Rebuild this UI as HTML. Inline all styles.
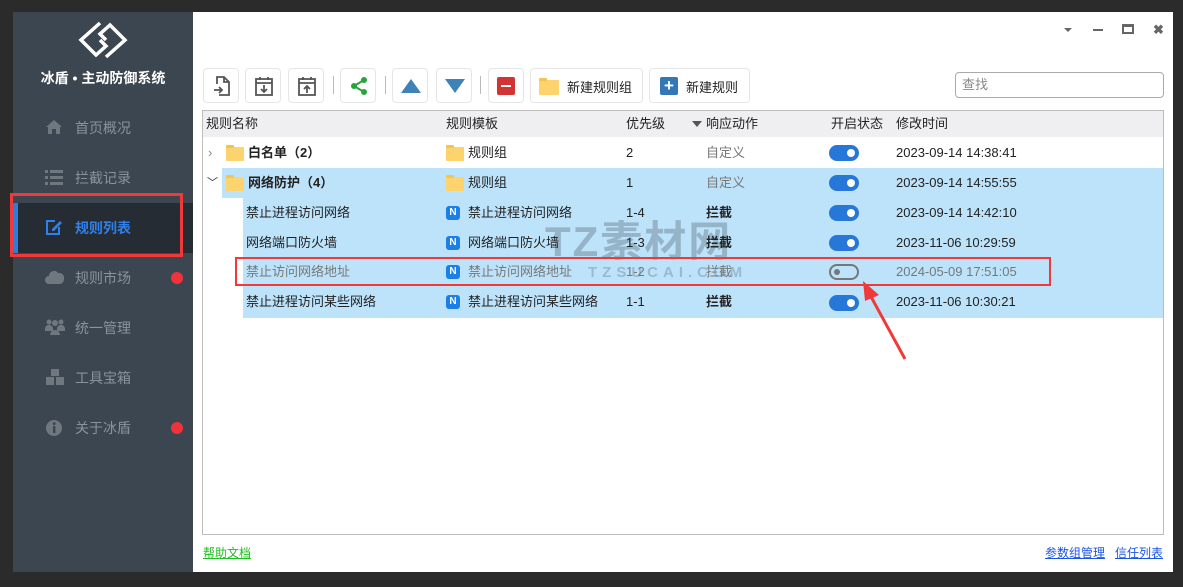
<!DOCTYPE html>
<html><head><meta charset="utf-8"><style>
*{margin:0;padding:0;box-sizing:border-box}
body{width:1183px;height:587px;background:#2b2b2b;position:relative;overflow:hidden;font-family:"Liberation Sans","Noto Sans CJK SC",sans-serif;font-size:13px;color:#222}
.abs{position:absolute}
#side{left:13px;top:12px;width:180px;height:560px;background:#3b4650}
#main{left:193px;top:12px;width:980px;height:560px;background:#fff}
.mi{position:absolute;left:13px;width:180px;height:50px;color:#8a939b;font-size:14px}
.mi span{position:absolute;left:62px;top:15px}
.mi svg{position:absolute;left:32px;top:16px}
.dot{position:absolute;left:158px;top:19px;width:12px;height:12px;border-radius:6px;background:#f2323a}
.btn{position:absolute;top:68px;height:35px;border:1px solid #e6e6e6;border-radius:4px;background:#fff}
.sep{position:absolute;top:76px;width:1px;height:18px;background:#bbb}
.row{position:absolute;height:30px;line-height:30px;font-size:13px}
.tog{position:absolute;width:30px;height:16px;border-radius:8px;background:#2777d9}
.tog::after{content:"";position:absolute;right:4px;top:4px;width:8px;height:8px;border-radius:4px;background:#fff}
.fold{position:absolute;width:18px;height:14px;background:#fdd36d;border-radius:1px}
.fold::before{content:"";position:absolute;left:0;top:-2px;width:8px;height:3px;background:#f7c34f;border-radius:1px 1px 0 0}
.nic{position:absolute;width:14px;height:14px;border-radius:3px;background:#1a7fe6;color:#fff;font-size:10px;font-weight:bold;line-height:14px;text-align:center}
</style></head><body>
<div id="side" class="abs"></div>
<div id="main" class="abs"></div>
<!-- logo -->
<svg class="abs" style="left:76px;top:20px" width="54" height="40" viewBox="0 0 54 40"><g fill="none" stroke="#fff" stroke-width="3.5"><path d="M24 3 L5 20 L20 35 L30 26 L24 20"/><path d="M30 37 L49 20 L34 5 L24 14 L30 20"/></g></svg>
<div class="abs" style="left:13px;width:180px;top:68px;text-align:center;color:#fff;font-weight:bold;font-size:14px">冰盾 • 主动防御系统</div>
<div class="mi" style="top:103px"><svg width="18" height="16" viewBox="0 0 18 16"><path d="M9 1 L1 8 H3 V15 H7 V10 H11 V15 H15 V8 H17Z" fill="#6f787f"/></svg><span>首页概况</span></div>
<div class="mi" style="top:153px"><svg width="18" height="16" viewBox="0 0 18 16" fill="#6f787f"><rect x="0" y="1" width="3" height="3"/><rect x="5" y="1" width="13" height="3"/><rect x="0" y="7" width="3" height="3"/><rect x="5" y="7" width="13" height="3"/><rect x="0" y="13" width="3" height="3"/><rect x="5" y="13" width="13" height="3"/></svg><span>拦截记录</span></div>
<div class="abs" style="left:13px;top:203px;width:180px;height:50px;background:#262c33"></div>
<div class="abs" style="left:13px;top:203px;width:5px;height:50px;background:#2d7de0"></div>
<div class="mi" style="top:203px;color:#2f80e8;font-weight:bold"><svg width="18" height="16" viewBox="0 0 18 16"><path d="M10 2 H2 V15 H14 V8" fill="none" stroke="#2f80e8" stroke-width="2"/><path d="M7 10 L15 2 L17 4 L9 12 H7Z" fill="#2f80e8"/></svg><span>规则列表</span></div>
<div class="mi" style="top:253px"><svg width="20" height="16" viewBox="0 0 20 16"><path d="M4 15 A4 4 0 0 1 4 7 A5 5 0 0 1 13 4 A5 5 0 0 1 19 10 A5 5 0 0 1 15 15Z" fill="#6f787f"/></svg><span>规则市场</span><i class="dot"></i></div>
<div class="mi" style="top:303px"><svg width="20" height="16" viewBox="0 0 20 16" fill="#6f787f"><circle cx="4" cy="3" r="2.5"/><circle cx="10" cy="4" r="3"/><circle cx="16" cy="3" r="2.5"/><path d="M0 11 A4 4 0 0 1 8 9 V12 H0Z M5 16 A5 5 0 0 1 15 16Z M12 9 A4 4 0 0 1 20 11 V12 H12Z"/></svg><span>统一管理</span></div>
<div class="mi" style="top:353px"><svg width="20" height="18" viewBox="0 0 20 18" fill="#6f787f"><rect x="6" y="0" width="8" height="7"/><rect x="1" y="8" width="8" height="8"/><rect x="11" y="8" width="8" height="8"/></svg><span>工具宝箱</span></div>
<div class="mi" style="top:403px"><svg width="18" height="18" viewBox="0 0 18 18"><circle cx="9" cy="9" r="8" fill="#6f787f"/><rect x="8" y="7" width="2.4" height="7" fill="#3b4650"/><circle cx="9.2" cy="4.6" r="1.4" fill="#3b4650"/></svg><span>关于冰盾</span><i class="dot"></i></div>
<div class="abs" style="left:10px;top:193px;width:173px;height:64px;border:3px solid #f03a3a"></div>
<!-- window controls -->
<div class="abs" style="left:1064px;top:28px;border-left:4px solid transparent;border-right:4px solid transparent;border-top:4px solid #666"></div>
<div class="abs" style="left:1093px;top:29px;width:10px;height:2px;background:#666"></div>
<div class="abs" style="left:1122px;top:24px;width:12px;height:10px;border:2px solid #666;border-top-width:3px"></div>
<div class="abs" style="left:1153px;top:22px;font-size:13px;color:#666;font-weight:bold">✖</div>
<!-- toolbar -->
<div class="btn" style="left:203px;width:36px"><svg style="margin:7px 0 0 9px" width="18" height="20" viewBox="0 0 18 20" fill="none" stroke="#555" stroke-width="1.8"><path d="M4 8 V1 H11 L16 6 V19 H6"/><path d="M11 1 V6 H16"/><path d="M1 14 H9 M6 11 L9 14 L6 17"/></svg></div>
<div class="btn" style="left:245px;width:36px"><svg style="margin:7px 0 0 9px" width="18" height="20" viewBox="0 0 18 20" fill="none" stroke="#555" stroke-width="1.8"><rect x="1" y="3" width="16" height="16"/><path d="M1 7 H17 M5 1 V4 M13 1 V4 M9 9 V16 M6 13 L9 16 L12 13"/></svg></div>
<div class="btn" style="left:288px;width:36px"><svg style="margin:7px 0 0 9px" width="18" height="20" viewBox="0 0 18 20" fill="none" stroke="#555" stroke-width="1.8"><rect x="1" y="3" width="16" height="16"/><path d="M1 7 H17 M5 1 V4 M13 1 V4 M9 17 V10 M6 13 L9 10 L12 13"/></svg></div>
<div class="sep" style="left:333px"></div>
<div class="btn" style="left:340px;width:36px"><svg style="margin:7px 0 0 8px" width="20" height="20" viewBox="0 0 20 20"><path d="M15 4 L5 10 L15 16" stroke="#25a53c" stroke-width="2" fill="none"/><circle cx="15" cy="4" r="3" fill="#25a53c"/><circle cx="5" cy="10" r="3" fill="#25a53c"/><circle cx="15" cy="16" r="3" fill="#25a53c"/></svg></div>
<div class="sep" style="left:385px"></div>
<div class="btn" style="left:392px;width:36px"><svg style="margin:9px 0 0 7px" width="22" height="16"><path d="M11 1 L21 15 H1Z" fill="#3f82b8"/></svg></div>
<div class="btn" style="left:436px;width:36px"><svg style="margin:9px 0 0 7px" width="22" height="16"><path d="M1 1 H21 L11 15Z" fill="#3f82b8"/></svg></div>
<div class="sep" style="left:480px"></div>
<div class="btn" style="left:488px;width:36px"><div style="margin:8px 0 0 8px;width:18px;height:18px;background:#d33333;border-radius:2px;position:relative"><div style="position:absolute;left:4px;top:8px;width:10px;height:2px;background:#fff"></div></div></div>
<div class="btn" style="left:530px;width:113px"><div class="fold" style="left:8px;top:11px;width:20px;height:15px"></div><span style="position:absolute;left:36px;top:8px">新建规则组</span></div>
<div class="btn" style="left:649px;width:101px"><div style="position:absolute;left:10px;top:8px;width:18px;height:18px;background:#3477b7;border-radius:2px;color:#fff;text-align:center;line-height:17px;font-size:17px;font-weight:bold">+</div><span style="position:absolute;left:36px;top:8px">新建规则</span></div>
<div class="abs" style="left:955px;top:72px;width:209px;height:26px;border:1px solid #aaa;border-radius:4px;color:#888;padding:0 6px;line-height:24px;font-size:13px">查找</div>
<!-- table -->
<div class="abs" style="left:202px;top:110px;width:962px;height:425px;border:1px solid #bdbdbd"></div>
<div class="abs" style="left:203px;top:111px;width:960px;height:26px;background:#efeff1"></div>
<div class="row" style="left:206px;top:109px">规则名称</div>
<div class="row" style="left:446px;top:109px">规则模板</div>
<div class="row" style="left:626px;top:109px">优先级</div>
<div class="abs" style="left:692px;top:121px;border-left:5px solid transparent;border-right:5px solid transparent;border-top:6px solid #555"></div>
<div class="row" style="left:706px;top:109px">响应动作</div>
<div class="row" style="left:831px;top:109px">开启状态</div>
<div class="row" style="left:896px;top:109px">修改时间</div>
<!-- highlight -->
<div class="abs" style="left:222px;top:168px;width:941px;height:30px;background:#bde3fb"></div>
<div class="abs" style="left:243px;top:198px;width:920px;height:120px;background:#bde3fb"></div>
<!-- watermark -->
<div class="abs" style="left:545px;top:208px;font-size:42px;font-weight:bold;color:rgba(90,110,125,.4);letter-spacing:2px">TZ素材网</div>
<div class="abs" style="left:588px;top:264px;font-size:15px;font-weight:bold;color:rgba(90,110,125,.35);letter-spacing:5px">TZSUCAI.COM</div>
<!-- row1 -->
<div class="row" style="left:208px;top:138px;color:#888">›</div>
<div class="fold" style="left:226px;top:147px"></div>
<div class="row" style="left:248px;top:138px;font-weight:bold">白名单（2）</div>
<div class="fold" style="left:446px;top:147px"></div>
<div class="row" style="left:468px;top:138px">规则组</div>
<div class="row" style="left:626px;top:138px">2</div>
<div class="row" style="left:706px;top:138px;color:#777">自定义</div>
<div class="tog" style="left:829px;top:145px"></div>
<div class="row" style="left:896px;top:138px">2023-09-14 14:38:41</div>
<!-- row2 -->
<div class="row" style="left:207px;top:168px;color:#333;font-size:11px">﹀</div>
<div class="fold" style="left:226px;top:177px"></div>
<div class="row" style="left:248px;top:168px;font-weight:bold">网络防护（4）</div>
<div class="fold" style="left:446px;top:177px"></div>
<div class="row" style="left:468px;top:168px">规则组</div>
<div class="row" style="left:626px;top:168px">1</div>
<div class="row" style="left:706px;top:168px;color:#777">自定义</div>
<div class="tog" style="left:829px;top:175px"></div>
<div class="row" style="left:896px;top:168px">2023-09-14 14:55:55</div>
<!-- children -->
<div class="row" style="left:246px;top:198px">禁止进程访问网络</div>
<div class="nic" style="left:446px;top:206px">N</div>
<div class="row" style="left:468px;top:198px">禁止进程访问网络</div>
<div class="row" style="left:626px;top:198px">1-4</div>
<div class="row" style="left:706px;top:198px;font-weight:bold">拦截</div>
<div class="tog" style="left:829px;top:205px"></div>
<div class="row" style="left:896px;top:198px">2023-09-14 14:42:10</div>

<div class="row" style="left:246px;top:228px">网络端口防火墙</div>
<div class="nic" style="left:446px;top:236px">N</div>
<div class="row" style="left:468px;top:228px">网络端口防火墙</div>
<div class="row" style="left:626px;top:228px">1-3</div>
<div class="row" style="left:706px;top:228px;font-weight:bold">拦截</div>
<div class="tog" style="left:829px;top:235px"></div>
<div class="row" style="left:896px;top:228px">2023-11-06 10:29:59</div>

<div class="row" style="left:246px;top:257px;color:#777">禁止访问网络地址</div>
<div class="nic" style="left:446px;top:265px">N</div>
<div class="row" style="left:468px;top:257px;color:#777">禁止访问网络地址</div>
<div class="row" style="left:626px;top:257px;color:#777">1-2</div>
<div class="row" style="left:706px;top:257px;color:#777">拦截</div>
<div class="abs" style="left:829px;top:264px;width:30px;height:16px;border-radius:8px;border:2px solid #777"><div style="position:absolute;left:3px;top:3px;width:6px;height:6px;border-radius:3px;background:#777"></div></div>
<div class="row" style="left:896px;top:257px;color:#777">2024-05-09 17:51:05</div>

<div class="row" style="left:246px;top:287px">禁止进程访问某些网络</div>
<div class="nic" style="left:446px;top:295px">N</div>
<div class="row" style="left:468px;top:287px">禁止进程访问某些网络</div>
<div class="row" style="left:626px;top:287px">1-1</div>
<div class="row" style="left:706px;top:287px;font-weight:bold">拦截</div>
<div class="tog" style="left:829px;top:295px"></div>
<div class="row" style="left:896px;top:287px">2023-11-06 10:30:21</div>

<div class="abs" style="left:235px;top:257px;width:816px;height:29px;border:2px solid #f03a3a"></div>
<svg class="abs" style="left:855px;top:275px" width="60" height="90"><path d="M50 84 L14 18" stroke="#f03a3a" stroke-width="3"/><path d="M8 6 L24 20 L10 26Z" fill="#f03a3a"/></svg>
<!-- footer -->
<div class="abs" style="left:203px;top:544px;color:#1fbf1f;text-decoration:underline;font-size:12px">帮助文档</div>
<div class="abs" style="left:1045px;top:544px;color:#1a55e8;text-decoration:underline;font-size:12px">参数组管理</div>
<div class="abs" style="left:1115px;top:544px;color:#1a55e8;text-decoration:underline;font-size:12px">信任列表</div>
</body></html>
